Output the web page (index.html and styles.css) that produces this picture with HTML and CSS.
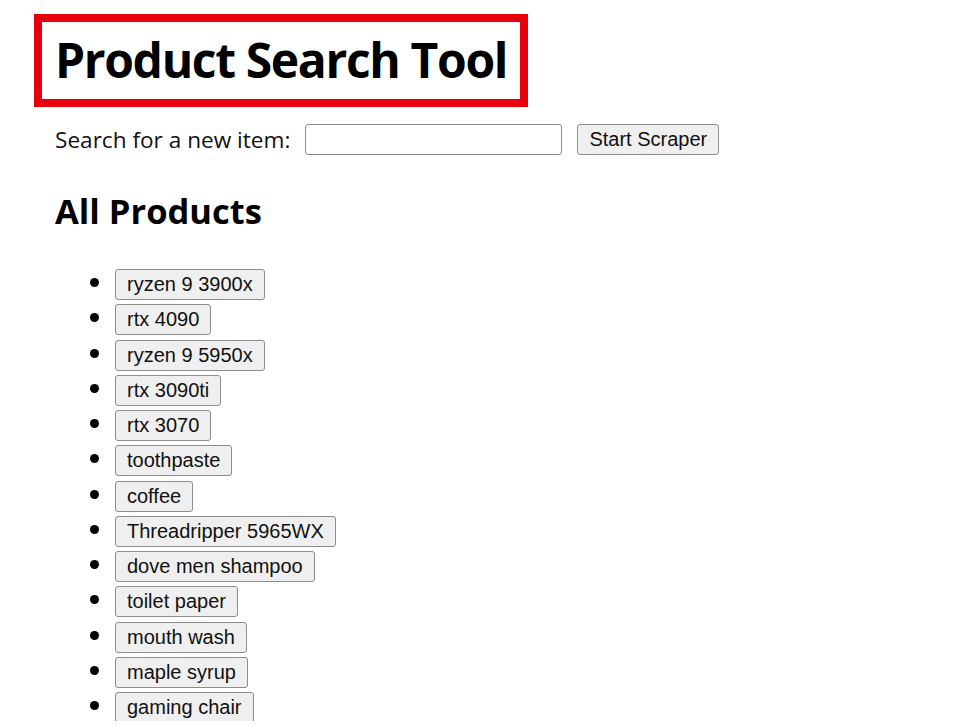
FILE: index.html
```html
<!DOCTYPE html>
<html>
<head>
<meta charset="utf-8">
<link rel="stylesheet" href="styles.css">
</head>
<body>
<div class="page">
  <h1 class="title">Product Search Tool</h1>
  <div class="search">
    <label class="search-label" for="q">Search for a new item:</label>
    <input class="search-input" id="q" type="text">
    <button class="btn btn-start">Start Scraper</button>
  </div>
  <h2 class="section">All Products</h2>
  <ul class="products">
    <li><button class="btn">ryzen 9 3900x</button></li>
    <li><button class="btn">rtx 4090</button></li>
    <li><button class="btn">ryzen 9 5950x</button></li>
    <li><button class="btn">rtx 3090ti</button></li>
    <li><button class="btn">rtx 3070</button></li>
    <li><button class="btn">toothpaste</button></li>
    <li><button class="btn">coffee</button></li>
    <li><button class="btn">Threadripper 5965WX</button></li>
    <li><button class="btn">dove men shampoo</button></li>
    <li><button class="btn">toilet paper</button></li>
    <li><button class="btn">mouth wash</button></li>
    <li><button class="btn">maple syrup</button></li>
    <li><button class="btn">gaming chair</button></li>
  </ul>
</div>
</body>
</html>
```
FILE: styles.css
```css
html, body {
  margin: 0;
  padding: 0;
  background: #fff;
}
body {
  font-family: "Open Sans", "Noto Sans", sans-serif;
  color: #000;
}
.page {
  padding: 14px 0 0 34px;
}
.title {
  display: inline-block;
  margin: 0;
  border: 8px solid #e8000b;
  padding: 8px 13px 9px 13px;
  font-size: 48px;
  font-weight: 700;
  line-height: 60px;
  letter-spacing: -1.35px;
}
.search {
  display: flex;
  align-items: center;
  margin: 16px 0 0 21px;
  height: 32px;
}
.search-label {
  font-size: 22.6px;
  color: #111;
  margin-right: 15px;
}
.search-input {
  width: 257px;
  height: 31px;
  box-sizing: border-box;
  border: 1px solid #8a8a8a;
  border-radius: 3px;
  margin-right: 15px;
}
.btn {
  font-family: "Liberation Sans", Arial, sans-serif;
  font-size: 20px;
  color: #111;
  background: #efefef;
  border: 1.5px solid #8d8d8d;
  border-radius: 3px;
  height: 31px;
  padding: 0 11px;
  box-sizing: border-box;
}
.btn-start {
  width: 142px;
  padding: 0;
}
.section {
  margin: 34px 0 0 21px;
  font-size: 34.5px;
  font-weight: 700;
  line-height: 44px;
}
.products {
  margin: 30px 0 0 0;
  padding-left: 81px;
}
.products li {
  height: 35.25px;
  font-size: 26px;
}
```
